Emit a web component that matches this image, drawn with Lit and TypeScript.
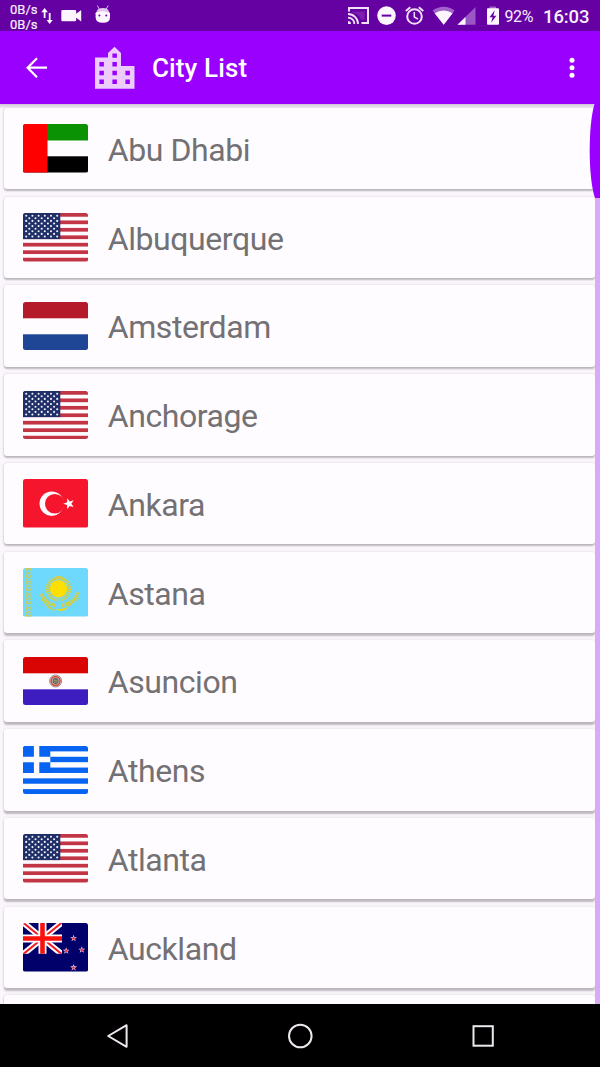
import { LitElement, html, css, svg } from "lit";
import { customElement, property } from "lit/decorators.js";

type Flag = "ae" | "us" | "nl" | "tr" | "kz" | "py" | "gr" | "nz";

const starPoints = (cx: number, cy: number, r: number, turn = -90) =>
  Array.from({ length: 10 }, (_, i) => {
    const a = ((turn + i * 36) * Math.PI) / 180;
    const q = i % 2 ? r * 0.4 : r;
    return `${(cx + q * Math.cos(a)).toFixed(2)},${(cy + q * Math.sin(a)).toFixed(2)}`;
  }).join(" ");

const range = (n: number) => Array.from({ length: n }, (_, i) => i);

const flags: Record<Flag, () => unknown> = {
  ae: () => svg`
    <rect width="65" height="48.5" fill="#fffcff"/>
    <rect width="65" height="16.5" fill="#0b9204"/>
    <rect y="32.3" width="65" height="16.2" fill="#000"/>
    <rect width="24.5" height="48.5" fill="#fe0000"/>`,
  us: () => svg`
    <rect width="65" height="48.5" fill="#fffcff"/>
    ${range(7).map((i) => svg`<rect y=${i * 7.46} width="65" height="3.73" fill="#c23545"/>`)}
    <rect width="37.3" height="26.1" fill="#1f2f68"/>
    ${range(9).map((r) =>
      range(r % 2 ? 5 : 6).map(
        (c) => svg`<circle cx=${3.2 + c * 6.2 + (r % 2 ? 3.1 : 0)} cy=${2.7 + r * 2.6} r="1.05" fill="#f4f1fa"/>`
      )
    )}`,
  nl: () => svg`
    <rect width="65" height="48.5" fill="#fffcff"/>
    <rect width="65" height="16.3" fill="#b51a2a"/>
    <rect y="32.3" width="65" height="16.2" fill="#1f4695"/>`,
  tr: () => svg`
    <rect width="65" height="48.5" fill="#f5152d"/>
    <circle cx="28.7" cy="24.7" r="12.2" fill="#fffcff"/>
    <circle cx="31.8" cy="24.7" r="9.8" fill="#f5152d"/>
    <polygon points=${starPoints(46, 24.7, 5.8, 180)} fill="#fffcff"/>`,
  kz: () => svg`
    <rect width="65" height="48.5" fill="#6fd8fd"/>
    <path d="M3.7 0V48.5M8 0V48.5" stroke="#c8cc58" stroke-width="1.5" stroke-dasharray="3 1.4 1.2 1"/>
    <path d="M5.9 0V48.5" stroke="#c8cc58" stroke-width="2.6" stroke-dasharray="1.4 2.9"/>
    <circle cx="35.5" cy="20.7" r="11" fill="none" stroke="#d2cf4a" stroke-width="3.6" stroke-dasharray="1.5 .7"/>
    <circle cx="35.5" cy="20.7" r="8.7" fill="#ffdf00"/>
    <path d="M18.5 26c2 5 7 10 14 11.5M38.5 37.5c7-1.5 13-5 17-13" fill="none" stroke="#d6cf3c" stroke-width="3.4" stroke-dasharray="2.6 .8"/>
    <path d="M19 31c3 6 8 10 14 11.5M44 38c5-2 9-5 12-9" fill="none" stroke="#d6cf3c" stroke-width="2" stroke-dasharray="2 1"/>
    <path d="M33 41c5 .5 8-1 12-2l-3 3c-3 1.5-6 1.5-9-1z" fill="#ebd71c"/>`,
  py: () => svg`
    <rect width="65" height="48.5" fill="#fffcff"/>
    <rect width="65" height="16.3" fill="#d90505"/>
    <rect y="32.3" width="65" height="16.2" fill="#3d1dc0"/>
    <circle cx="32.6" cy="24" r="6" fill="#f4dcdc" stroke="#9b8f97" stroke-width="1"/>
    <circle cx="32.6" cy="24" r="4.5" fill="#b7bc8e" stroke="#d44a40" stroke-width="1.5"/>
    <circle cx="32.6" cy="24" r="2.9" fill="#5f5a80"/>
    <path d="M30.5 23.2h4M31 25h3.5" stroke="#d8be55" stroke-width=".7"/>`,
  gr: () => svg`
    <rect width="65" height="48.5" fill="#fffcff"/>
    ${range(5).map((i) => svg`<rect y=${i * 10.78} width="65" height="5.39" fill="#0763f2"/>`)}
    <rect width="27.3" height="26.95" fill="#0763f2"/>
    <path d="M13.6 0V26.95M0 13.5H27.3" stroke="#fffcff" stroke-width="5.4"/>`,
  nz: () => svg`
    <rect width="65" height="48.5" fill="#01006a"/>
    <svg width="39" height="30.8" viewBox="0 0 39 30.8">
      <path d="M0 -.5L39 31.3M39 -.5L0 31.3" stroke="#fffcff" stroke-width="6"/>
      <path d="M0 -.5L39 31.3M39 -.5L0 31.3" stroke="#f31a20" stroke-width="2"/>
      <path d="M19.5 0V31M0 15.5H39" stroke="#fffcff" stroke-width="8"/>
      <path d="M19.5 0V31M0 15.5H39" stroke="#fb100c" stroke-width="4.6"/>
    </svg>
    ${[[50.6, 15.3], [43.2, 27.8], [58.8, 26.8], [50.6, 44.5]].map(
      ([x, y]) => svg`<polygon points=${starPoints(x, y, 3.6)} fill="#f6d9ea"/><polygon points=${starPoints(x, y + 0.1, 2.2)} fill="#e0243c"/>`
    )}`,
};

@customElement("city-row")
class CityRow extends LitElement {
  @property() name = "";
  @property() flag: Flag = "us";

  static styles = css`
    :host {
      box-sizing: border-box;
      display: flex;
      align-items: center;
      flex: none;
      height: 81.5px;
      padding: 0 20px 0 19.4px;
      gap: 19.3px;
      border-radius: 3px;
      background: #fffcff;
      box-shadow: 0 var(--drop, 1.6px) 1.8px rgba(40, 30, 45, 0.27), 0 0 3px rgba(40, 30, 45, 0.13);
    }
    .flag {
      flex: none;
      width: 65px;
      height: 48.5px;
      border-radius: 2.5px;
      overflow: hidden;
    }
    .name {
      font-size: 32px;
      letter-spacing: -0.42px;
      line-height: 40px;
      color: #737174;
      padding-top: 2.6px;
      white-space: nowrap;
    }
  `;

  render() {
    return html`
      <svg class="flag" viewBox="0 0 65 48.5" preserveAspectRatio="none">${flags[this.flag]()}</svg>
      <span class="name">${this.name}</span>
    `;
  }
}

@customElement("status-bar")
class StatusBar extends LitElement {
  static styles = css`
    :host {
      display: flex;
      justify-content: space-between;
      flex: none;
      height: 31px;
      background: #6500a3;
      color: #f7effb;
    }
    .left,
    .right {
      display: flex;
      align-items: center;
    }
    .left {
      padding-left: 10px;
    }
    .rate {
      font-size: 13px;
      line-height: 15.4px;
      width: 31px;
      padding-top: 3px;
      white-space: nowrap;
      -webkit-text-stroke: 0.2px currentColor;
    }
    .battery {
      font-size: 16px;
      letter-spacing: -0.4px;
      width: 38.5px;
      padding: 1px 0 0 0.5px;
    }
    .clock {
      font-size: 18.5px;
      letter-spacing: -0.1px;
      font-weight: 500;
      width: 57px;
      padding-top: 2px;
    }
    svg {
      display: block;
    }
  `;

  render() {
    return html`
      <div class="left">
        <div class="rate">0B/s<br />0B/s</div>
        <svg width="80" height="31" viewBox="41 0 80 31" fill="#fdf6ff">
          <path d="M44.600 8l3.300 4.200h-2.400V18h-1.800v-5.800h-2.400zM49.600 24l-3-4h2.200V13h1.800v7h2.200z" />
          <path d="M62.500 10h12.500q1.200 0 1.200 1.200v2.600l5-3.800v11.500l-5-3.800v2.300q0 1.200-1.200 1.200H62.500q-1.200 0-1.200-1.200v-8.800q0-1.200 1.200-1.200z" />
          <path d="M96.500 12q6-2.500 12.500 0l1 1.200v4q0 5.500-7.100 5.500T95.600 17.200v-4z" />
          <path d="M97.300 5.500l2.200 4M108.200 5.500l-2.200 4" stroke="#d9b9ec" stroke-width="1" />
          <path d="M96.500 12q.8-4 6.400-4t6.200 4q-6-1.600-12.600 0z" fill="#dfc4ef" />
          <circle cx="99.400" cy="15.600" r="1" fill="#6500a3" />
          <circle cx="106.300" cy="15.600" r="1" fill="#6500a3" />
        </svg>
      </div>
      <div class="right">
        <svg width="156" height="31" viewBox="348 0 156 31" fill="none">
          <path d="M349 11.500V8h19v15h-6.500" stroke="#f1e2f9" stroke-width="2" />
          <path d="M352.500 11.500h12.200v8.200h-3.700q-1.500-5.500-8.500-7z" fill="#7a1fb0" />
          <path d="M348 14a10 10 0 0 1 10 10M348 17.600a6.400 6.400 0 0 1 6.400 6.400" stroke="#f1e2f9" stroke-width="1.800" />
          <path d="M348 21a3 3 0 0 1 3 3h-3z" fill="#f1e2f9" />
          <circle cx="386.500" cy="15.600" r="9.300" fill="#fdf6ff" />
          <path d="M381.700 15.600h9.600" stroke="#6500a3" stroke-width="2" />
          <circle cx="414.500" cy="16.500" r="7.300" stroke="#f1e2f9" stroke-width="2" />
          <path d="M414.300 12v5l3.700 2.200" stroke="#f1e2f9" stroke-width="1.500" />
          <path d="M405.800 11l4.500-3.700M423.300 11l-4.500-3.700" stroke="#f1e2f9" stroke-width="1.900" />
          <path d="M432.600 10.500q11.400-7.500 22 0L443.700 24.800z" fill="#a262c9" />
          <path d="M434.600 13.200q9-5.600 18 0l-8.900 11.600z" fill="#fdf6ff" />
          <path d="M475.500 7v17.800h-18z" fill="#9a56c4" />
          <path d="M465.500 17v7.800h-8z" fill="#fdf6ff" />
          <path d="M489.500 6.500h6.500v2.500h-6.500z" fill="#a262c9" />
          <rect x="487" y="8.200" width="12" height="16.600" rx="1" fill="#fdf6ff" />
          <path d="M494.800 10.300l-5.300 6.900h3.100l-1.500 5.500 5.300-6.900h-3.100z" fill="#6500a3" />
        </svg>
        <span class="battery">92%</span>
        <span class="clock">16:03</span>
      </div>
    `;
  }
}

@customElement("title-bar")
class TitleBar extends LitElement {
  static styles = css`
    :host {
      display: flex;
      align-items: center;
      flex: none;
      height: 73px;
      background: #9a00fe;
      color: #fff;
    }
    .icons {
      flex: none;
      width: 152px;
    }
    .title {
      flex: 1;
      font-size: 26px;
      letter-spacing: 0.12px;
      font-weight: 500;
      line-height: 36px;
    }
    .more {
      flex: none;
      width: 56px;
    }
    svg {
      display: block;
    }
  `;

  render() {
    return html`
      <svg class="icons" height="73" viewBox="0 31 152 73">
        <path d="M47 67.700H28M37 58.300L27.600 67.700L37 77.200" fill="none" stroke="#fff" stroke-width="2.200" />
        <path
          fill="#eecbfd"
          fill-rule="evenodd"
          d="M95 57.500h13V53l6.500-6.300L121 53v13h13.500v22.700H95zM99.400 62v4.500h4.500V62zM99.400 70.800v4.500h4.500v-4.500zM99.400 79.500v4.500h4.500v-4.500zM112.400 53.500v4.300h4.500v-4.300zM112.400 62v4.500h4.500V62zM112.400 70.800v4.500h4.500v-4.500zM112.400 79.500v4.500h4.500v-4.500zM125.400 70.800v4.500h4.500v-4.500zM125.400 79.500v4.500h4.500v-4.500z"
        />
      </svg>
      <span class="title">City List</span>
      <svg class="more" height="73" viewBox="544 31 56 73" fill="#fff">
        <circle cx="572" cy="60.200" r="2.500" />
        <circle cx="572" cy="67.700" r="2.500" />
        <circle cx="572" cy="75.200" r="2.500" />
      </svg>
    `;
  }
}

@customElement("app-root")
class AppRoot extends LitElement {
  static styles = css`
    :host {
      display: flex;
      flex-direction: column;
      width: 600px;
      height: 1067px;
      overflow: hidden;
      font-family: Roboto, sans-serif;
      background: #faf6fb;
    }
    .content {
      position: relative;
      display: flex;
      flex: 1;
      min-height: 0;
      overflow: hidden;
    }
    .list {
      flex: 1;
      display: flex;
      flex-direction: column;
      gap: 7.28px;
      padding: 3.8px 0 0 4px;
    }
    .track {
      flex: none;
      width: 5px;
      background: #d9a9fa;
    }
    .edge {
      position: absolute;
      top: 0;
      left: 0;
      right: 0;
      height: 4px;
      background: linear-gradient(#cfc4d6, rgba(225, 220, 230, 0.3));
    }
    .thumb {
      position: absolute;
      top: 0;
      right: 0;
    }
    .nav {
      flex: none;
      height: 63px;
      background: #000;
    }
    .nav svg {
      display: block;
    }
  `;

  private cities: [string, Flag][] = [
    ["Abu Dhabi", "ae"],
    ["Albuquerque", "us"],
    ["Amsterdam", "nl"],
    ["Anchorage", "us"],
    ["Ankara", "tr"],
    ["Astana", "kz"],
    ["Asuncion", "py"],
    ["Athens", "gr"],
    ["Atlanta", "us"],
    ["Auckland", "nz"],
  ];

  render() {
    return html`
      <status-bar></status-bar>
      <title-bar></title-bar>
      <div class="content">
        <div class="list">
          ${this.cities.map(
            ([name, flag], i) =>
              html`<city-row .name=${name} .flag=${flag} style="--drop: ${(1.2 + i * 0.18).toFixed(2)}px"></city-row>`
          )}
          <city-row .name=${""} .flag=${"us"}></city-row>
        </div>
        <div class="track"></div>
        <div class="edge"></div>
        <svg class="thumb" width="12" height="94" viewBox="588 104 12 94">
          <path d="M600 104H594.500C588 125 588 178 595 198H600z" fill="#9a00fe" />
        </svg>
      </div>
      <div class="nav">
        <svg width="600" height="63" viewBox="0 1004 600 63" fill="none" stroke="#ece8ee" stroke-width="2">
          <path d="M126.600 1025.200V1046.800L108.200 1036z" stroke-linejoin="round" />
          <circle cx="300.300" cy="1036" r="11.300" />
          <rect x="473.500" y="1026.200" width="19.300" height="19.500" />
        </svg>
      </div>
    `;
  }
}
